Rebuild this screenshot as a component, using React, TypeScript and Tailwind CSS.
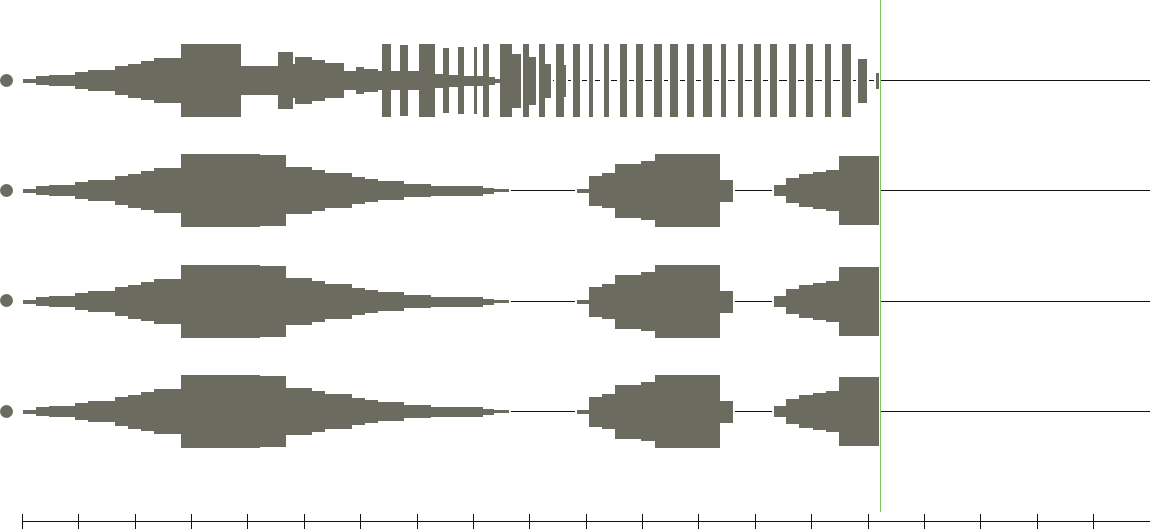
import React from 'react';

// waveform colours
const WAVE = '#6b6b5f';
const LINE = '#111111';

type Seg = [number, number, number]; // x0, x1, half height
type Span = [number, number];

// shared attack ramp used by every track
const RAMP: Seg[] = [
  [23, 36, 2],
  [36, 49, 4.3],
  [49, 75, 5.8],
  [75, 88, 8.3],
  [88, 115, 10.8],
  [115, 128, 14.3],
  [128, 141, 17],
  [141, 154, 19.5],
  [154, 181, 22.3],
];

const TRACK_ONE: Seg[] = [
  ...RAMP,
  [181, 241, 36.5],
  [241, 278, 14.3],
  [278, 293, 28.3],
  [293, 295, 17],
  [295, 312, 23.3],
  [312, 325, 20.3],
  [325, 344, 17.3],
  [344, 356, 9.3],
  [356, 364, 13.3],
  [364, 378, 11.3],
  [378, 382, 9.3],
  // envelope under the bars
  [382, 420, 9.3],
  [420, 443, 7],
  [443, 458, 6],
  [458, 483, 5],
  [483, 495, 4],
  [495, 500, 2],
  // bars
  [382, 391, 36.5],
  [400, 408, 35.3],
  [419, 435, 36.5],
  [443, 449, 32.3],
  [458, 464, 33.3],
  [474, 477, 33.3],
  [483, 489, 36.5],
  [500, 512, 36.5],
  [512, 521, 27],
  [523, 529, 36.5],
  [529, 536, 24],
  [539, 545, 36.5],
  [545, 551, 17],
  [556, 564, 36.5],
  [564, 566, 16],
  [573, 580, 36.5],
  [589, 593, 36.5],
  [604, 609, 36.5],
  [620, 627, 36.5],
  [636, 643, 36.5],
  [654, 662, 36.5],
  [670, 678, 36.5],
  [687, 694, 36.5],
  [703, 712, 36.5],
  [721, 726, 36.5],
  [738, 743, 36.5],
  [754, 761, 36.5],
  [770, 777, 36.5],
  [789, 796, 36.5],
  [806, 813, 36.5],
  [825, 831, 36.5],
  [842, 851, 36.5],
  [858, 867, 22],
  [876, 879, 8],
];

const TRACK_ONE_LINES: Span[] = [
  [553, 554], [568, 571], [582, 587], [595, 600], [611, 617], [629, 634],
  [645, 652], [664, 668], [680, 685], [696, 701], [714, 719], [728, 735],
  [745, 752], [763, 768], [779, 787], [798, 804], [815, 822], [833, 840],
  [853, 856], [869, 874], [880, 1150],
];

const TRACK_REST: Seg[] = [
  ...RAMP,
  [181, 260, 36.3],
  [260, 286, 35.3],
  [286, 312, 23.5],
  [312, 325, 20.5],
  [325, 352, 17.5],
  [352, 365, 13.5],
  [365, 378, 11.5],
  [378, 404, 9.5],
  [404, 431, 6.5],
  [431, 483, 5],
  [483, 494, 3],
  [494, 509, 1.5],
  [577, 589, 2],
  [589, 602, 15],
  [602, 615, 17.5],
  [615, 641, 27],
  [641, 655, 29.5],
  [655, 720, 36.3],
  [720, 733, 11],
  [774, 786, 5.5],
  [786, 799, 12.3],
  [799, 813, 16.3],
  [813, 826, 18.3],
  [826, 839, 20.3],
  [839, 879, 34.3],
];

const TRACK_REST_LINES: Span[] = [[511, 575], [735, 772], [880, 1150]];

const TRACKS = [
  { segs: TRACK_ONE, lines: TRACK_ONE_LINES },
  { segs: TRACK_REST, lines: TRACK_REST_LINES },
  { segs: TRACK_REST, lines: TRACK_REST_LINES },
  { segs: TRACK_REST, lines: TRACK_REST_LINES },
];

function Track({ segs, lines }: { segs: Seg[]; lines: Span[] }) {
  return (
    <div className="flex h-[110.3px] items-center">
      <div className="h-[13px] w-[13px] shrink-0 rounded-full bg-[#6b6b5f]" />
      <svg
        className="ml-[9px] block shrink-0"
        width={1128}
        height={110}
        viewBox="22 0 1128 110"
        shapeRendering="crispEdges"
      >
        {lines.map(([a, b], i) => (
          <rect key={`l${i}`} x={a} y={55} width={b - a} height={1} fill={LINE} />
        ))}
        {segs.map(([a, b, h], i) => (
          <rect key={`s${i}`} x={a} y={55.5 - h} width={b - a} height={h * 2} fill={WAVE} />
        ))}
      </svg>
    </div>
  );
}

function Ruler() {
  const ticks = Array.from({ length: 20 }, (_, i) => Math.round(22 + i * 56.37));
  return (
    <svg className="mt-auto block" width={1150} height={16} shapeRendering="crispEdges">
      <rect x={22} y={8} width={1128} height={1} fill={LINE} />
      {ticks.map((x) => (
        <rect key={x} x={x} y={1} width={1} height={15} fill={LINE} />
      ))}
    </svg>
  );
}

export default function App() {
  return (
    <div className="relative flex h-[529px] w-[1150px] flex-col overflow-hidden bg-white">
      <div className="flex flex-col pt-[25px]">
        {TRACKS.map((t, i) => (
          <Track key={i} segs={t.segs} lines={t.lines} />
        ))}
      </div>
      <Ruler />
      {/* playhead */}
      <div className="absolute left-[880px] top-0 h-[512px] w-px bg-[#7bc657]" />
    </div>
  );
}
